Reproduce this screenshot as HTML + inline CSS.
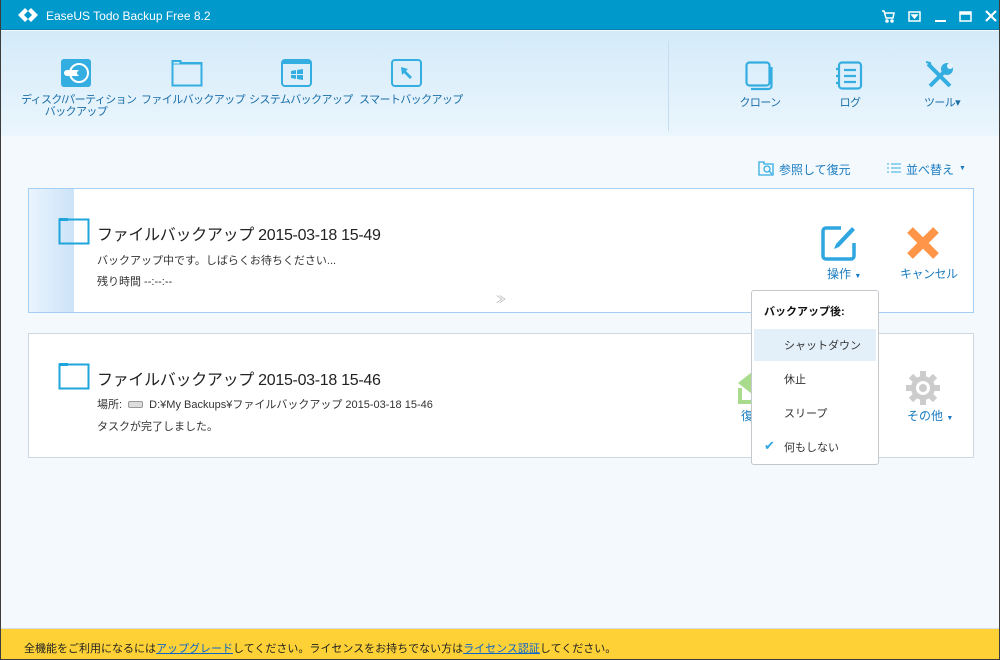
<!DOCTYPE html>
<html><head><meta charset="utf-8"><style>
*{margin:0;padding:0;box-sizing:border-box}
body{width:1000px;height:660px;overflow:hidden;font-family:"Liberation Sans","Noto Sans CJK JP",sans-serif;background:#3c3c3c;position:relative}
.win{position:absolute;left:1px;top:0;width:998px;height:659px;background:#f4f9fe}
.title{position:absolute;left:0;top:0;width:998px;height:30px;background:#0099cc;border-bottom:1px solid #0a7fae;color:#fff;font-size:12px}
.head{position:absolute;left:0;top:31px;width:998px;height:105px;background:linear-gradient(#d4eaf9,#ebf6fd)}
.tb{position:absolute;text-align:center;font-size:11px;color:#1a6ea8;line-height:12px;white-space:nowrap;letter-spacing:-0.6px}
.a{position:absolute;font-size:12px;white-space:nowrap}
.card{position:absolute;left:27px;width:946px;background:#fff}
.t{position:absolute;font-size:16px;color:#222;white-space:nowrap;letter-spacing:-0.3px}
.s{position:absolute;font-size:11px;color:#333;white-space:nowrap}
.blue{color:#1a7cc0}
.foot{position:absolute;left:0;top:628px;width:998px;height:31px;background:#fed237;border-top:1px solid #d8dee6;font-size:11px;color:#222;padding:11px 0 0 23px;white-space:nowrap}
.foot u{color:#0b64c8}
.menu{position:absolute;left:750px;top:290px;width:128px;height:175px;background:#fff;border:1px solid #c4c8cc;border-radius:3px;font-size:11px;color:#333}
.menu div{position:absolute;left:0;width:126px;white-space:nowrap}
</style></head><body>
<div class="win">
<div class="title">
<svg style="position:absolute;left:16px;top:7px" width="22" height="16" viewBox="0 0 22 16"><path d="M8 1 L1 8 L8 15 L11 12 L7 8 L11 4Z M14 1 L21 8 L14 15 L11 12 L15 8 L11 4Z" fill="#fff"/></svg>
<span style="position:absolute;left:45px;top:9px">EaseUS Todo Backup Free 8.2</span>
<svg style="position:absolute;left:880px;top:9px" width="100" height="14" viewBox="0 0 100 14" fill="none" stroke="#fff" stroke-width="1.5">
<path d="M1 2h2l2 7h7l1-5H4"/><circle cx="6" cy="12" r="1" fill="#fff"/><circle cx="11" cy="12" r="1" fill="#fff"/>
<rect x="28" y="3" width="11" height="9"/><path d="M31 6h5l-2.5 3z" fill="#fff"/>
<path d="M54 12h11" stroke-width="2"/>
<rect x="79" y="3" width="11" height="9"/><path d="M79 4.5h11" stroke-width="2.5"/>
</svg>
<svg style="position:absolute;left:984px;top:10px" width="12" height="12" viewBox="0 0 12 12"><path d="M1 1L11 11M11 1L1 11" stroke="#fff" stroke-width="2.2"/></svg>
</div>
<div class="head">
<svg style="position:absolute;left:60px;top:28px" width="30" height="28" viewBox="0 0 30 28"><rect width="30" height="28" rx="3" fill="#34aee0"/><circle cx="18" cy="14" r="9" fill="none" stroke="#fff" stroke-width="2"/><rect x="3" y="11" width="16" height="6" rx="3" fill="#fff"/><circle cx="18" cy="14" r="2" fill="#34aee0"/></svg>
<div class="tb" style="left:20px;top:63px;width:110px">ディスク/パーティション<br>バックアップ</div>
<svg style="position:absolute;left:170px;top:28px" width="32" height="28" viewBox="0 0 32 28"><path d="M1.5 2h8v2h21v22.5h-29z" fill="none" stroke="#34aee0" stroke-width="2"/><path d="M1 1h8v2H1z" fill="#34aee0"/><path d="M2 5h28" stroke="#34aee0"/></svg>
<div class="tb" style="left:140px;top:63px;width:92px">ファイルバックアップ</div>
<svg style="position:absolute;left:280px;top:28px" width="31" height="28" viewBox="0 0 31 28"><rect x="1" y="1" width="29" height="26" rx="3" fill="none" stroke="#34aee0" stroke-width="2"/><rect x="1" y="1" width="29" height="4" fill="#34aee0"/><path d="M10 12l5-1v4h-5zM16 11l6-1v5h-6zM10 16h5v4l-5-1zM16 16h6v5l-6-1z" fill="#34aee0"/></svg>
<div class="tb" style="left:248px;top:63px;width:95px">システムバックアップ</div>
<svg style="position:absolute;left:390px;top:28px" width="31" height="28" viewBox="0 0 31 28"><rect x="1" y="1" width="29" height="26" rx="3" fill="none" stroke="#34aee0" stroke-width="2"/><path d="M10 8l7 2-2 2 6 6-2 2-6-6-2 2z" fill="#34aee0"/></svg>
<div class="tb" style="left:358px;top:63px;width:95px">スマートバックアップ</div>
<div style="position:absolute;left:667px;top:10px;width:1px;height:90px;background:#c5ddee"></div>
<svg style="position:absolute;left:744px;top:30px" width="30" height="30" viewBox="0 0 30 30" fill="none" stroke="#34aee0" stroke-width="2.2"><rect x="1.5" y="1.5" width="23" height="23" rx="3"/><path d="M26.5 6v19a3 3 0 0 1-3 3H6"/></svg>
<div class="tb" style="left:730px;top:66px;width:58px">クローン</div>
<svg style="position:absolute;left:834px;top:30px" width="30" height="30" viewBox="0 0 30 30" fill="none" stroke="#34aee0" stroke-width="2.2"><rect x="4" y="1.5" width="22" height="26" rx="3"/><path d="M9 9h12M9 15h12M9 21h12M1 8h4M1 15h4M1 22h4"/></svg>
<div class="tb" style="left:820px;top:66px;width:58px">ログ</div>
<svg style="position:absolute;left:924px;top:30px" width="30" height="30" viewBox="0 0 30 30"><path d="M3 3l22 22" stroke="#34aee0" stroke-width="4"/><path d="M5 25L20 10" stroke="#34aee0" stroke-width="4"/><circle cx="22" cy="8" r="6" fill="#34aee0"/><circle cx="25" cy="5" r="3" fill="#e6f3fc"/><path d="M1 1l4 1 1 4" stroke="#34aee0" stroke-width="2" fill="none"/></svg>
<div class="tb" style="left:912px;top:66px;width:58px">ツール▾</div>
</div>

<svg style="position:absolute;left:757px;top:161px" width="16" height="15" viewBox="0 0 16 15" fill="none" stroke="#34aee0" stroke-width="1.3"><path d="M1 1h5v2h9v11H1z"/><circle cx="9" cy="8" r="3"/><path d="M11 10l3 3"/></svg>
<div class="a blue" style="left:778px;top:161px">参照して復元</div>
<svg style="position:absolute;left:886px;top:163px" width="14" height="11" viewBox="0 0 14 11" stroke="#34aee0"><path d="M0 1h2M4 1h10M0 5h2M4 5h10M0 9h2M4 9h10"/></svg>
<div class="a blue" style="left:905px;top:161px">並べ替え</div>
<div class="a" style="left:958px;top:165px;color:#1a7cc0;font-size:7px">▼</div>

<div class="card" style="top:188px;height:125px;border:1px solid #a6d0f3">
<div style="position:absolute;left:0;top:0;width:45px;height:123px;background:linear-gradient(90deg,#eaf4fd,#cce3f8)"></div>
<svg style="position:absolute;left:29px;top:28px" width="32" height="28" viewBox="0 0 32 28"><path d="M1.5 2.5h29v24h-29z" fill="none" stroke="#1fa5dc" stroke-width="2"/><path d="M1 1h9v3H1z" fill="#1fa5dc"/></svg>
<div class="t" style="left:68px;top:32px">ファイルバックアップ 2015-03-18 15-49</div>
<div class="s" style="left:68px;top:63px">バックアップ中です。しばらくお待ちください...</div>
<div class="s" style="left:68px;top:84px">残り時間 --:--:--</div>
<div class="s" style="left:467px;top:102px;color:#aaa;font-size:10px">≫</div>
<svg style="position:absolute;left:792px;top:36px" width="36" height="36" viewBox="0 0 36 36"><path d="M20 3H5a3 3 0 0 0-3 3v25a3 3 0 0 0 3 3h25a3 3 0 0 0 3-3V18" fill="none" stroke="#2fa6e0" stroke-width="3.5"/><path d="M31 2l3 3-16 17-5 2 2-5z" fill="#2fa6e0"/></svg>
<div class="a blue" style="left:798px;top:76px">操作 <span style="font-size:7px">▼</span></div>
<svg style="position:absolute;left:876px;top:36px" width="36" height="36" viewBox="0 0 36 36"><path d="M5 5L31 31M31 5L5 31" stroke="#fe9548" stroke-width="8"/></svg>
<div class="a blue" style="left:871px;top:76px;letter-spacing:-0.5px">キャンセル</div>
</div>

<div class="card" style="top:333px;height:125px;border:1px solid #cfd8e0">
<svg style="position:absolute;left:29px;top:28px" width="32" height="28" viewBox="0 0 32 28"><path d="M1.5 2.5h29v24h-29z" fill="none" stroke="#1fa5dc" stroke-width="2"/><path d="M1 1h9v3H1z" fill="#1fa5dc"/></svg>
<div class="t" style="left:68px;top:32px">ファイルバックアップ 2015-03-18 15-46</div>
<div class="s" style="left:68px;top:62px">場所: <span style="display:inline-block;width:15px;height:7px;border:1px solid #999;background:#ddd;border-radius:2px;margin:0 3px"></span> D:¥My Backups¥ファイルバックアップ 2015-03-18 15-46</div>
<div class="s" style="left:68px;top:84px">タスクが完了しました。</div>
<svg style="position:absolute;left:708px;top:36px" width="20" height="36" viewBox="0 0 20 36"><path d="M1 13L15 2v22z" fill="#a8dc8c"/><path d="M3 18v14h20" fill="none" stroke="#a8dc8c" stroke-width="4"/></svg>
<div class="a blue" style="left:712px;top:73px">復</div>
<svg style="position:absolute;left:876px;top:36px" width="36" height="36" viewBox="0 0 36 36"><g stroke="#ccc" stroke-width="6"><path d="M18 1v34M1 18h34M6 6l24 24M30 6L6 30"/></g><circle cx="18" cy="18" r="12" fill="#ccc"/><circle cx="18" cy="18" r="7" fill="#fff"/><circle cx="18" cy="18" r="4" fill="#ccc"/></svg>
<div class="a blue" style="left:878px;top:73px">その他 <span style="font-size:7px">▼</span></div>
</div>

<div class="menu">
<div style="top:12px;left:12px;font-weight:bold;color:#111">バックアップ後:</div>
<div style="top:38px;left:2px;width:122px;height:32px;background:#e3eff9"></div>
<div style="top:46px;left:32px">シャットダウン</div>
<div style="top:80px;left:32px">休止</div>
<div style="top:114px;left:32px">スリープ</div>
<div style="top:147px;left:12px;color:#2fa6e0;font-size:13px">✔</div>
<div style="top:148px;left:32px">何もしない</div>
</div>

<div class="foot">全機能をご利用になるには<u>アップグレード</u>してください。ライセンスをお持ちでない方は<u>ライセンス認証</u>してください。</div>
</div>
</body></html>
